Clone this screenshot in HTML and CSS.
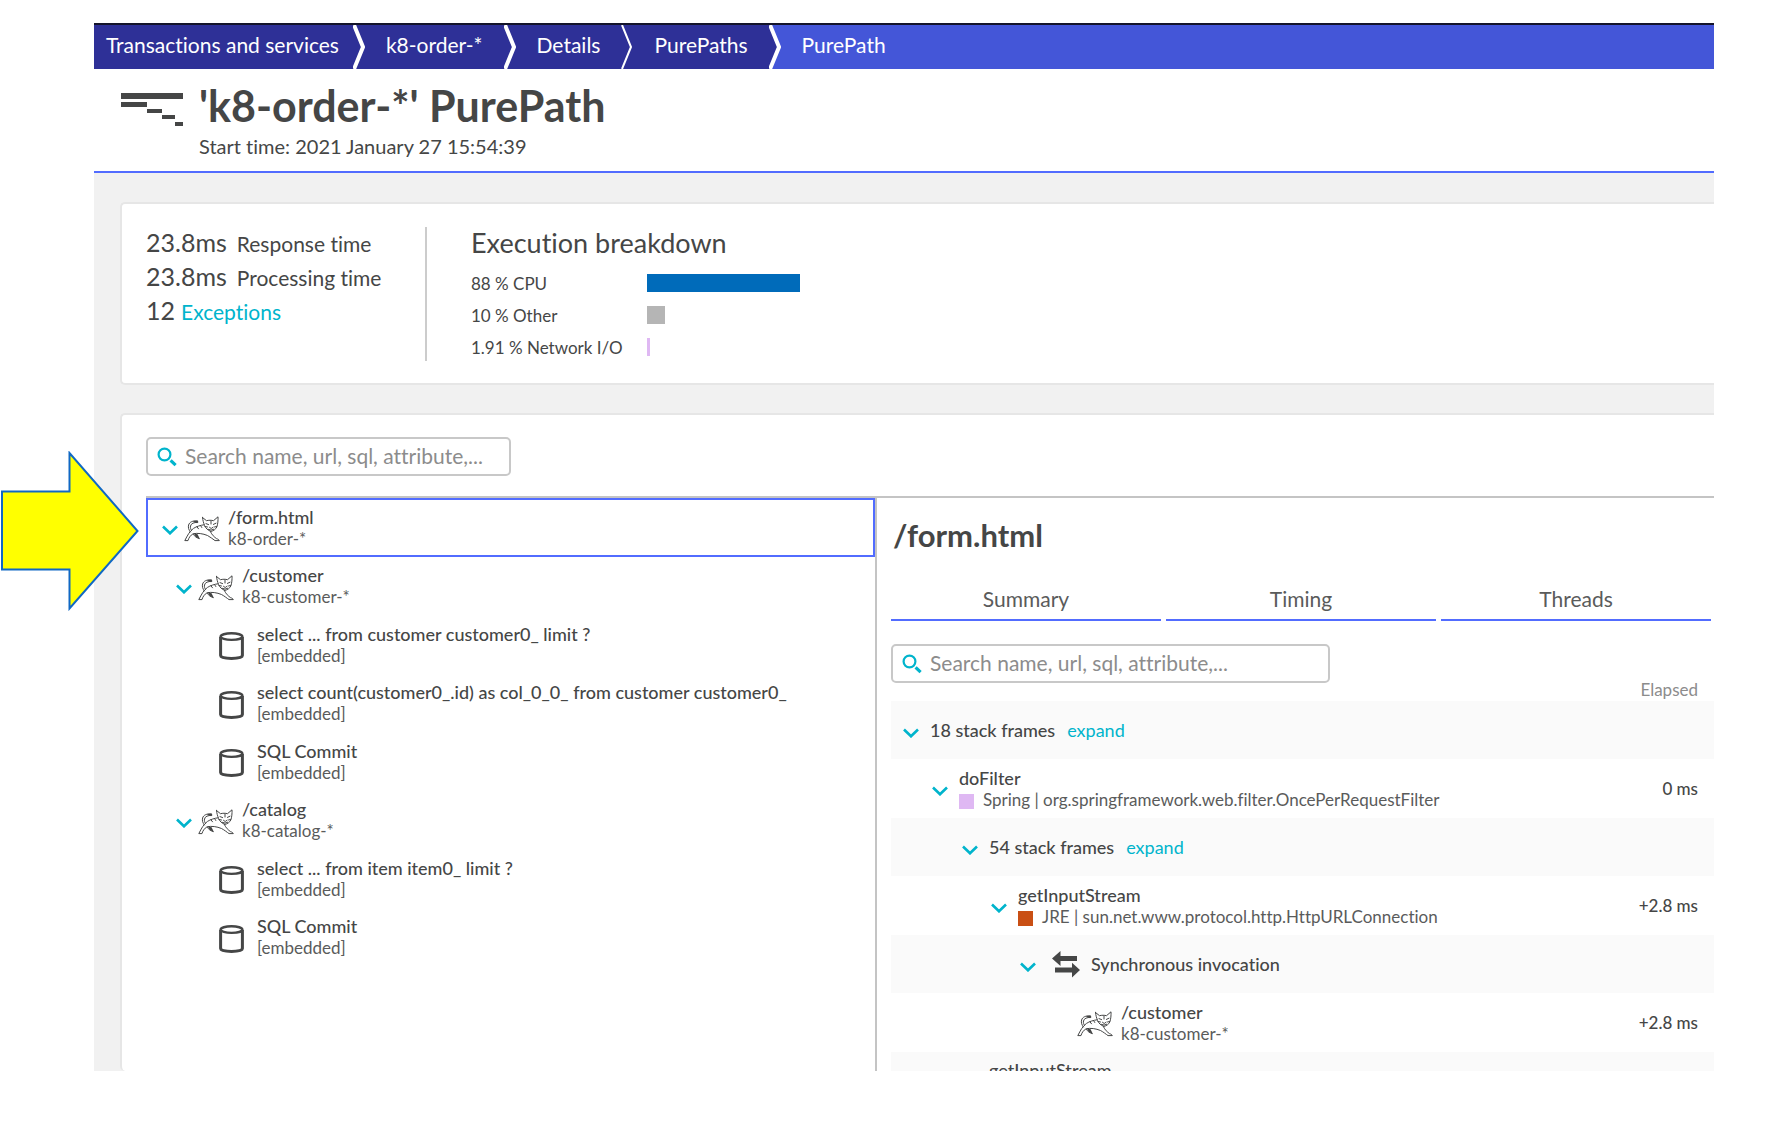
FILE: index.html
```html
<!DOCTYPE html>
<html lang="en">
<head>
<meta charset="utf-8">
<title>'k8-order-*' PurePath</title>
<link rel="stylesheet" href="styles.css">
</head>
<body>
<svg class="symbols" aria-hidden="true">
  <symbol id="chevron" viewBox="0 0 16 10"><path d="M1 1.5 8 8.3 15 1.5" fill="none" stroke="currentColor" stroke-width="2.6"/></symbol>
  <symbol id="search" viewBox="0 0 20 20"><circle cx="7.500" cy="7.500" r="5.900" fill="none" stroke="currentColor" stroke-width="2.200"/><path d="M13.600 13.400l5 4.800" stroke="currentColor" stroke-width="3.200"/></symbol>
  <symbol id="database" viewBox="0 0 25 28"><path d="M1.6 5v18.500c0 1.700 4.900 2.900 10.900 2.900s10.900-1.200 10.900-2.900V5" fill="none" stroke="currentColor" stroke-width="3"/><ellipse cx="12.500" cy="4.600" rx="10.900" ry="3.300" fill="none" stroke="currentColor" stroke-width="2.400"/></symbol>
  <symbol id="sync" viewBox="0 0 28 27"><path d="M0 7.500 8.500 0v5h16.500v5H8.500v5zM28 19 20 11.800v4.800H3v5h17v5z" fill="currentColor"/></symbol>
  <symbol id="tomcat" viewBox="0 0 36 26">
    <g fill="none" stroke="currentColor" stroke-width="1" stroke-linejoin="round" stroke-linecap="round">
      <path d="M18.500 1.500l4 3.200c2-.6 5-.6 7 0L34 .8c.2 3.500-.2 7.500-1.200 10.200-1.200 2.400-3.300 3.800-5.800 4.400-3-1-5.500-3.200-6.500-6-.9-2.400-1.700-5-2-7.900z"/>
      <path d="M22 7.600l2.600 1M32 7.200l-2.600 1.200M25.500 11.300l1.700 1.200 1.900-1.300M24.300 13.300l2.800.8 2.600-.9M27 5v3M21 10.500l2.500.5M32.500 10.500l-2 .5"/>
      <path d="M12.500 5.200C9 4.400 5.500 6 4.600 9c-.7 2.500.2 5 1.800 7M13.500 6.500c-3.500-.3-6.300.8-7 3.500-.4 1.700.2 3.200 1 4.500"/>
      <path d="M20 8.800c-3.500.4-7.600 1.700-10.500 3.600C5.500 15.200 3.500 19.500.8 24.600H4c.6-2.600 2.500-5.300 5-6.800 4.500-1 10-.2 14.500 1.700 3 1.600 5.500 3.700 7.500 5.100h4.300c-.3-1-1.300-1.500-2.700-1.900-2.300-1.700-4.600-3.600-6.300-7.300"/>
      <path d="M9.500 18.500c1 1.800 3 3.300 5.500 4M13 10.800l1.500 2M16.500 9.500l1.300 2"/>
    </g>
    <path d="M9 5l4.500-.8 1 2-2.800.9zM9.600 17l4 1.200 2.400 5-4.200-2.300z" fill="currentColor"/>
  </symbol>
</svg>

<main class="frame">
  <nav class="crumbs" aria-label="Breadcrumb">
    <a class="crumb crumb-first" href="#">Transactions and services</a>
    <svg class="crumb-sep" viewBox="0 0 12 44" aria-hidden="true"><path class="sep-line" d="M1 0l9 22-9 22"/></svg>
    <a class="crumb" href="#">k8-order-*</a>
    <svg class="crumb-sep" viewBox="0 0 12 44" aria-hidden="true"><path class="sep-line" d="M1 0l9 22-9 22"/></svg>
    <a class="crumb" href="#">Details</a>
    <svg class="crumb-sep" viewBox="0 0 12 44" aria-hidden="true"><path class="sep-line thin" d="M1 0l9 22-9 22"/></svg>
    <a class="crumb" href="#">PurePaths</a>
    <svg class="crumb-sep last" viewBox="0 0 12 44" aria-hidden="true"><path class="sep-fill" d="M0 0h1l9 22-9 22H0z"/><path class="sep-line" d="M1 0l9 22-9 22"/></svg>
    <a class="crumb current" href="#" aria-current="page">PurePath</a>
  </nav>

  <header class="page-head">
    <svg class="path-icon" viewBox="0 0 62 34" aria-hidden="true"><path d="M0 0h62v6H0zM0 9h26v5H0zM26 16h15v4H26zM41 22h13v4H41zM54 29h8v4h-8z" fill="#454646"/></svg>
    <div>
      <h1>'k8-order-*' PurePath</h1>
      <p class="start">Start time: 2021 January 27 15:54:39</p>
    </div>
  </header>

  <div class="content">
    <section class="card overview">
      <ul class="stats">
        <li><span class="value">23.8ms</span>Response time</li>
        <li><span class="value">23.8ms</span>Processing time</li>
        <li><span class="value count">12</span><a href="#">Exceptions</a></li>
      </ul>
      <div class="breakdown">
        <h2>Execution breakdown</h2>
        <ul class="bars">
          <li><span>88 % CPU</span><i class="bar cpu"></i></li>
          <li><span>10 % Other</span><i class="bar other"></i></li>
          <li><span>1.91 % Network I/O</span><i class="bar network"></i></li>
        </ul>
      </div>
    </section>

    <section class="card trace">
      <label class="search tree-search"><svg aria-hidden="true"><use href="#search"/></svg><input type="text" aria-label="Search services" placeholder="Search name, url, sql, attribute,..."></label>
      <div class="split">
        <ul class="tree">
          <li class="node selected"><svg class="chevron"><use href="#chevron"/></svg><svg class="tomcat"><use href="#tomcat"/></svg><div class="lines"><b>/form.html</b><span>k8-order-*</span></div></li>
          <li class="node level-1"><svg class="chevron"><use href="#chevron"/></svg><svg class="tomcat"><use href="#tomcat"/></svg><div class="lines"><b>/customer</b><span>k8-customer-*</span></div></li>
          <li class="node level-2"><svg class="database"><use href="#database"/></svg><div class="lines"><b>select ... from customer customer0_ limit ?</b><span>[embedded]</span></div></li>
          <li class="node level-2"><svg class="database"><use href="#database"/></svg><div class="lines"><b>select count(customer0_.id) as col_0_0_ from customer customer0_</b><span>[embedded]</span></div></li>
          <li class="node level-2"><svg class="database"><use href="#database"/></svg><div class="lines"><b>SQL Commit</b><span>[embedded]</span></div></li>
          <li class="node level-1"><svg class="chevron"><use href="#chevron"/></svg><svg class="tomcat"><use href="#tomcat"/></svg><div class="lines"><b>/catalog</b><span>k8-catalog-*</span></div></li>
          <li class="node level-2"><svg class="database"><use href="#database"/></svg><div class="lines"><b>select ... from item item0_ limit ?</b><span>[embedded]</span></div></li>
          <li class="node level-2"><svg class="database"><use href="#database"/></svg><div class="lines"><b>SQL Commit</b><span>[embedded]</span></div></li>
        </ul>

        <div class="detail">
          <h2>/form.html</h2>
          <div class="tabs" role="tablist">
            <button type="button" role="tab">Summary</button>
            <button type="button" role="tab">Timing</button>
            <button type="button" role="tab">Threads</button>
          </div>
          <label class="search frame-search"><svg aria-hidden="true"><use href="#search"/></svg><input type="text" aria-label="Search stack frames" placeholder="Search name, url, sql, attribute,..."></label>
          <table class="stack">
            <thead><tr><td></td><th scope="col">Elapsed</th></tr></thead>
            <tbody>
              <tr><td><div class="call"><svg class="chevron"><use href="#chevron"/></svg><b>18 stack frames</b><a href="#">expand</a></div></td><td></td></tr>
              <tr><td><div class="call depth-1"><svg class="chevron"><use href="#chevron"/></svg><div class="lines"><b>doFilter</b><span><i class="swatch spring"></i>Spring | org.springframework.web.filter.OncePerRequestFilter</span></div></div></td><td class="time">0 ms</td></tr>
              <tr><td><div class="call depth-2"><svg class="chevron"><use href="#chevron"/></svg><b>54 stack frames</b><a href="#">expand</a></div></td><td></td></tr>
              <tr><td><div class="call depth-3"><svg class="chevron"><use href="#chevron"/></svg><div class="lines"><b>getInputStream</b><span><i class="swatch jre"></i>JRE | sun.net.www.protocol.http.HttpURLConnection</span></div></div></td><td class="time">+2.8 ms</td></tr>
              <tr><td><div class="call depth-4"><svg class="chevron"><use href="#chevron"/></svg><svg class="sync"><use href="#sync"/></svg><b>Synchronous invocation</b></div></td><td></td></tr>
              <tr><td><div class="call depth-5"><svg class="tomcat"><use href="#tomcat"/></svg><div class="lines"><b>/customer</b><span>k8-customer-*</span></div></div></td><td class="time">+2.8 ms</td></tr>
              <tr><td><div class="call depth-3 leaf"><div class="lines"><b>getInputStream</b></div></div></td><td></td></tr>
            </tbody>
          </table>
        </div>
      </div>
    </section>
  </div>
</main>

<svg class="pointer" viewBox="0 0 138 160" aria-hidden="true"><path d="M1 40.500H68.500V2L136.500 80 68.500 157.500V118.500H1z"/></svg>
</body>
</html>
```
FILE: styles.css
```css
* { box-sizing: border-box; }

body {
  margin: 0;
  height: 100vh;
  padding: 23px 77px 54px 94px;
  background: #fff;
  color: #454646;
  font: 18px/21px Lato, "Open Sans", sans-serif;
  font-variant-ligatures: none;
}

h1, h2, p, ul { margin: 0; padding: 0; }
ul { list-style: none; }
a { color: #00b4cc; text-decoration: none; }
b { font-weight: 500; }

.symbols { display: none; }
.frame { height: 100%; overflow: hidden; display: flex; flex-direction: column; }

/* Breadcrumb */
.crumbs {
  flex: none;
  display: flex;
  height: 46px;
  border-top: 2px solid #14142b;
  background: #2e3097;
  font-size: 21px;
  line-height: 40px;
}
.crumb { color: #fff; padding: 0 21px; white-space: nowrap; }
.crumb-first { padding: 0 14px 0 12px; }
.current { flex: 1; background: #4456d8; }
.crumb-sep { flex: none; width: 12px; height: 44px; }
.crumb-sep.last { background: #4456d8; }
.sep-fill { fill: #2e3097; }
.sep-line { fill: none; stroke: #fff; stroke-width: 4; }
.sep-line.thin { stroke-width: 2; }

/* Page header */
.page-head {
  flex: none;
  display: flex;
  gap: 16px;
  height: 104px;
  padding: 12px 27px 0;
  border-bottom: 2px solid #526cff;
}
.path-icon { width: 62px; height: 34px; margin-top: 12px; }
h1 { font-size: 43px; line-height: 50px; font-weight: 700; }
.start { font-size: 20px; line-height: 30px; }

/* Cards */
.content {
  flex: 1;
  min-height: 0;
  display: flex;
  flex-direction: column;
  gap: 28px;
  padding: 29px 0 0 26px;
  background: #f1f1f1;
}
.card {
  background: #fff;
  border: 2px solid #e6e6e6;
  border-right: 0;
  border-radius: 5px 0 0 5px;
}
.overview { flex: none; display: flex; height: 183px; padding: 23px 24px 22px; }
.stats { width: 281px; border-right: 2px solid #ccc; font-size: 21px; line-height: 34px; }
.value { font-size: 25px; line-height: 24px; margin-right: 10px; }
.count { margin-right: 6px; }
.breakdown { padding-left: 44px; }
.breakdown h2 { font-size: 27px; line-height: 32px; font-weight: 400; }
.bars { padding-top: 8px; font-size: 17px; }
.bars li { display: grid; grid-template-columns: 176px 153px; align-items: center; height: 32px; }
.bar { height: 18px; }
.cpu { width: 153px; background: #006bba; }
.other { width: 18px; background: #b5b5b5; }
.network { width: 3px; background: #dfb8f3; }

/* Trace card */
.trace { flex: 1; min-height: 0; padding: 22px 0 0 24px; border-bottom: 0; display: flex; flex-direction: column; }
.search {
  display: flex;
  align-items: center;
  gap: 8px;
  height: 39px;
  padding: 0 9px;
  border: 2px solid #c8c8c8;
  border-radius: 5px;
  color: #00b4cc;
}
.search svg { flex: none; width: 20px; height: 20px; }
.search input {
  flex: 1;
  min-width: 0;
  padding: 0 0 2px;
  border: 0;
  outline: 0;
  background: none;
  font: inherit;
  font-size: 21px;
  color: #454646;
}
.search input::placeholder { color: #8c8c8c; opacity: 1; }
.tree-search { flex: none; width: 365px; margin-bottom: 20px; }
.split { flex: 1; min-height: 0; display: grid; grid-template-columns: 731fr 837fr; border-top: 2px solid #c4c4c4; }

/* Service tree */
.tree { display: grid; grid-auto-rows: 59px 58px; align-content: start; border-right: 2px solid #c4c4c4; }
.node { display: flex; align-items: center; padding-left: 16px; }
.selected { border: 2px solid #526cff; padding-left: 14px; }
.level-1 { padding-left: 30px; }
.level-2 { padding-left: 73px; }
.chevron { flex: none; width: 16px; height: 10px; margin-top: 5px; color: #00b4cc; }
.tomcat { flex: none; width: 36px; height: 26px; margin: 3px 8px 0 6px; }
.database { flex: none; width: 25px; height: 28px; margin: 3px 13px 0 0; }
.lines { display: flex; flex-direction: column; white-space: nowrap; }
.lines span { font-size: 17px; color: #5a5b5b; }

/* Detail pane */
.detail { min-width: 0; padding: 20px 0 0 14px; }
.detail h2 { padding-left: 2px; font-size: 31px; line-height: 34px; font-weight: 700; }
.tabs { display: grid; grid-template-columns: repeat(3, 1fr); gap: 5px; padding: 27px 3px 0 0; }
.tabs button {
  height: 42px;
  padding: 0 0 2px;
  border: 0;
  border-bottom: 2px solid #526cff;
  background: none;
  font: inherit;
  font-size: 21px;
  color: #5a5b5b;
}
.frame-search { width: 439px; margin-top: 23px; }

.stack { width: 100%; border-collapse: collapse; }
.stack td, .stack th { padding: 0; }
.stack thead tr { height: 18px; }
.stack th { padding-right: 16px; line-height: 14px; text-align: right; vertical-align: top; font-size: 17px; font-weight: 400; color: #8c8c8c; }
.stack tbody tr { height: 58px; }
.stack tbody tr:nth-child(even) { height: 59px; }
.stack tbody tr:nth-child(odd) { background: #fafafa; }
.stack .time { padding-right: 16px; text-align: right; font-size: 17px; font-weight: 500; }
.call { display: flex; align-items: center; padding-left: 12px; }
.call .chevron { margin-right: 11px; }
.call a { margin-left: 12px; }
.depth-1 { padding-left: 41px; }
.depth-2 { padding-left: 71px; }
.depth-3 { padding-left: 100px; }
.depth-4 { padding-left: 129px; }
.depth-5 { padding-left: 180px; }
.leaf { padding-left: 98px; }
.leaf .lines { height: 42px; }
.sync { width: 28px; height: 27px; margin: 0 11px 0 5px; }
.swatch { display: inline-block; width: 15px; height: 15px; margin-right: 9px; vertical-align: -3px; }
.spring { background: #dfb8f3; }
.jre { background: #c94f14; }

/* Callout arrow over the page */
.pointer { position: absolute; left: 1px; top: 451px; width: 138px; height: 160px; }
.pointer path { fill: #ff0; stroke: #1068c4; stroke-width: 2; }
```
